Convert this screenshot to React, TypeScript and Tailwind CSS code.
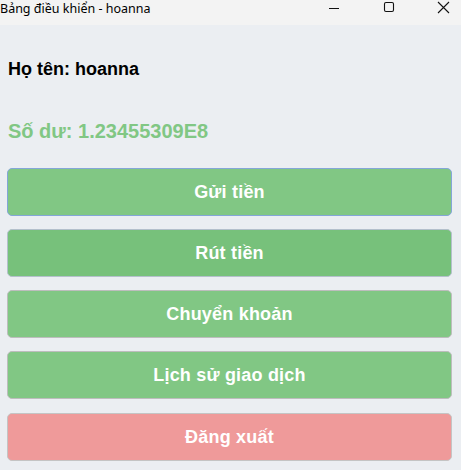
import React from 'react';

const buttons = [
  { label: 'Gửi tiền', bg: 'bg-[#81c784]', border: 'border-[#84a6d8]', extra: '' },
  { label: 'Rút tiền', bg: 'bg-[#77c17b]', border: 'border-[#b4c0cc]', extra: '' },
  { label: 'Chuyển khoản', bg: 'bg-[#81c784]', border: 'border-[#bdbdbd]', extra: '' },
  { label: 'Lịch sử giao dịch', bg: 'bg-[#81c784]', border: 'border-[#bdbdbd]', extra: '' },
  { label: 'Đăng xuất', bg: 'bg-[#ef9a9a]', border: 'border-[#c4c4c4]', extra: 'mt-[1px]' },
];

function TitleBar() {
  return (
    <div className="flex h-[25px] items-start bg-[#f3f3f3] text-black">
      <div className="flex-1 text-[12.5px] leading-[17px] font-['Noto_Sans',sans-serif]">
        Bảng điều khiển - hoanna
      </div>
      <div className="flex items-start">
        <svg width="12" height="12" viewBox="0 0 12 12" className="mt-[2px] mr-[43px]">
          <path d="M1 6.5h10" stroke="#111" strokeWidth="1" />
        </svg>
        <svg width="12" height="12" viewBox="0 0 12 12" className="mt-[1px] mr-[42px]">
          <rect x="1.5" y="1.5" width="9" height="9" rx="1.5" fill="none" stroke="#111" strokeWidth="1.1" />
        </svg>
        <svg width="13" height="13" viewBox="0 0 13 13" className="mt-[1px] mr-[11px]">
          <path d="M1 1l11 11M12 1L1 12" stroke="#111" strokeWidth="1.1" />
        </svg>
      </div>
    </div>
  );
}

export default function App() {
  return (
    <div className="w-[461px] h-[470px] overflow-hidden bg-[#ebeef2] font-['Liberation_Sans',Arial,sans-serif]">
      <TitleBar />
      <div className="pt-[32px] pl-[7px] pr-[9px]">
        <div className="ml-[1px] h-[24px] text-[18px] leading-[24px] font-bold text-black">
          Họ tên: hoanna
        </div>
        <div className="ml-[1px] mt-[36px] h-[28px] text-[20px] leading-[28px] font-bold text-[#81c784]">
          Số dư: 1.23455309E8
        </div>
        <div className="mt-[23px] flex flex-col gap-[13px]">
          {buttons.map((b) => (
            <button
              key={b.label}
              className={`h-[48px] w-full rounded-[5px] border ${b.border} ${b.bg} ${b.extra} text-[18px] font-bold tracking-[0.2px] text-white`}
            >
              {b.label}
            </button>
          ))}
        </div>
      </div>
    </div>
  );
}
